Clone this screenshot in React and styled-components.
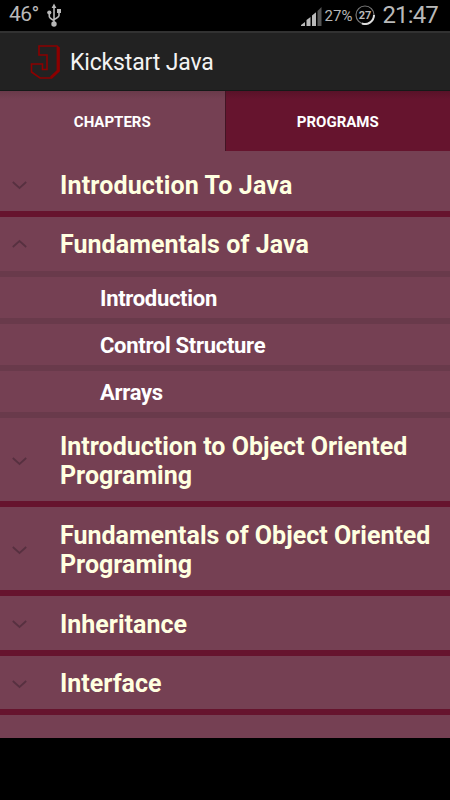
import React from 'react';
import styled, { createGlobalStyle } from 'styled-components';

const GlobalStyle = createGlobalStyle`
  * {
    box-sizing: border-box;
  }

  body {
    margin: 0;
    background: #000;
    font-family: Roboto, 'Liberation Sans', sans-serif;
  }
`;

const Screen = styled.div`
  display: flex;
  flex-direction: column;
  width: 450px;
  height: 800px;
  overflow: hidden;
  background: #000;
`;

const StatusBar = styled.div`
  display: flex;
  flex: none;
  align-items: center;
  height: 31px;
  padding: 0 12px 0 9px;
  color: #b9b9b9;
`;

const StatusIcon = styled.svg`
  flex: none;
  margin-left: ${props => props.$gap || 0}px;
  margin-top: ${props => props.$top || 0}px;
`;

const StatusText = styled.span`
  font-size: ${props => props.$size}px;
  line-height: 30px;
  letter-spacing: ${props => props.$spacing || 0}px;
  margin-left: ${props => props.$gap || 0}px;
  margin-top: ${props => props.$top || 0}px;
  white-space: nowrap;
`;

const Spacer = styled.div`
  flex: 1;
`;

const ActionBar = styled.div`
  display: flex;
  flex: none;
  align-items: center;
  height: 60px;
  padding-left: 30px;
  border-top: 2px solid #323232;
  border-bottom: 1px solid #151918;
  background: #222;
`;

const Title = styled.h1`
  margin: 2px 0 0 10px;
  color: #f3f3f3;
  font-size: 23px;
  font-weight: 400;
  line-height: 30px;
  letter-spacing: -0.15px;
`;

const Tabs = styled.div`
  display: flex;
  flex: none;
  height: 60px;
  background: #754053;
`;

const Tab = styled.div`
  flex: 1;
  color: #fff;
  font-size: 15px;
  font-weight: 700;
  line-height: 62px;
  text-align: center;
  background: ${props => (props.$active
    ? 'linear-gradient(#693a4a, #754053 8px)'
    : 'linear-gradient(#581228, #66142e 8px)')};
  border-left: ${props => (props.$active ? 'none' : '1px solid #421524')};
`;

const List = styled.div`
  flex: none;
  height: 587px;
  padding-top: 6.5px;
  overflow: hidden;
  background: #754053;
`;

const Group = styled.div`
  display: flex;
  align-items: center;
  height: ${props => (props.$lines === 2 ? 89 : 59.5)}px;
  border-bottom: 6px solid ${props => (props.$open ? '#693a4b' : '#66142e')};
`;

const Chevron = styled.svg`
  flex: none;
  margin: ${props => (props.$open ? -1 : 3)}px 0 0 12px;
  transform: ${props => (props.$open ? 'rotate(180deg)' : 'none')};
`;

const GroupLabel = styled.div`
  margin: 2.8px 0 0 33px;
  color: #ffffe0;
  font-size: 25px;
  font-weight: 700;
  line-height: 29.5px;
  letter-spacing: ${props => props.$spacing || 0}px;
  white-space: pre;
`;

const Child = styled.div`
  height: 47.25px;
  padding-left: 100px;
  border-bottom: 6px solid #693a4b;
  color: #fff;
  font-size: 22px;
  font-weight: 700;
  line-height: 43px;
  letter-spacing: -0.3px;
`;

const chapters = [
  { title: 'Introduction To Java', spacing: 0.16 },
  { title: 'Fundamentals of Java', spacing: 0.05, children: ['Introduction', 'Control Structure', 'Arrays'] },
  { title: 'Introduction to Object Oriented\nPrograming' },
  { title: 'Fundamentals of Object Oriented\nPrograming' },
  { title: 'Inheritance' },
  { title: 'Interface' },
];

const UsbIcon = () => (
  <StatusIcon $gap={8} $top={-1} width="15" height="24" viewBox="0 0 15 24" fill="none" stroke="#b9b9b9" strokeWidth="1.6">
    <path d="M7 3v18M2.300 9v4.500q0 1.500 4.700 4M12 8v4.500q0 1.500-5 4" />
    <path d="M7 .500L4.600 5h4.800z" fill="#b9b9b9" stroke="none" />
    <circle cx="7" cy="21" r="2.700" fill="#b9b9b9" stroke="none" />
    <circle cx="2.300" cy="9.500" r="2.100" fill="#b9b9b9" stroke="none" />
    <path d="M10 6h4v4h-4z" fill="#b9b9b9" stroke="none" />
  </StatusIcon>
);

const SignalIcon = () => (
  <StatusIcon $top={-1} width="21" height="21" viewBox="0 0 21 21" fill="#b9b9b9">
    <path d="M0 21v-1l4-3v4zM5.500 21v-6l4-3v9zM11 21V10.500l4-3.200V21z" />
    <path d="M16.500 21V6l4-4v19z" fill="#555" />
  </StatusIcon>
);

const Logo = () => (
  <svg width="30" height="36" viewBox="30 43 30 36" fill="none" stroke="#8c0000" strokeWidth="1.6">
    <path d="M39 45H57L59 47V70L51.500 77H40L31.500 71V63H42.500V68.500H47V54H39z" />
    <path d="M58 46V70L51 76.500" strokeWidth="2.800" />
  </svg>
);

class App extends React.Component {
  renderChapter(chapter) {
    const open = Boolean(chapter.children);

    return (
      <React.Fragment key={chapter.title}>
        <Group $open={open} $lines={chapter.title.split('\n').length}>
          <Chevron $open={open} width="15" height="9" viewBox="0 0 15 9" fill="none" stroke="#573040" strokeWidth="1.7">
            <path d="M.800 1l6.700 6L14.200 1" />
          </Chevron>
          <GroupLabel $spacing={chapter.spacing}>{chapter.title}</GroupLabel>
        </Group>
        {open && chapter.children.map(name => <Child key={name}>{name}</Child>)}
      </React.Fragment>
    );
  }

  render() {
    return (
      <Screen>
        <GlobalStyle />
        <StatusBar>
          <StatusText $size={21} $spacing={-0.5} $top={-3}>46°</StatusText>
          <UsbIcon />
          <Spacer />
          <SignalIcon />
          <StatusText $size={15} $gap={3}>27%</StatusText>
          <StatusIcon $gap={3} $top={-1} width="20" height="20" viewBox="0 0 20 20" fill="none">
            <circle cx="10" cy="10" r="9" stroke="#777" strokeWidth="1.2" />
            <path d="M19 10A9 9 0 0 1 7 18.500" stroke="#ddd" strokeWidth="2" />
            <text x="10" y="13.800" fill="#b9b9b9" fontSize="11" fontWeight="700" textAnchor="middle">27</text>
          </StatusIcon>
          <StatusText $size={24} $gap={7} $spacing={-0.85} $top={-1}>21:47</StatusText>
        </StatusBar>
        <ActionBar>
          <Logo />
          <Title>Kickstart Java</Title>
        </ActionBar>
        <Tabs>
          <Tab $active>CHAPTERS</Tab>
          <Tab>PROGRAMS</Tab>
        </Tabs>
        <List>{chapters.map(this.renderChapter)}</List>
      </Screen>
    );
  }
}

export default App;
